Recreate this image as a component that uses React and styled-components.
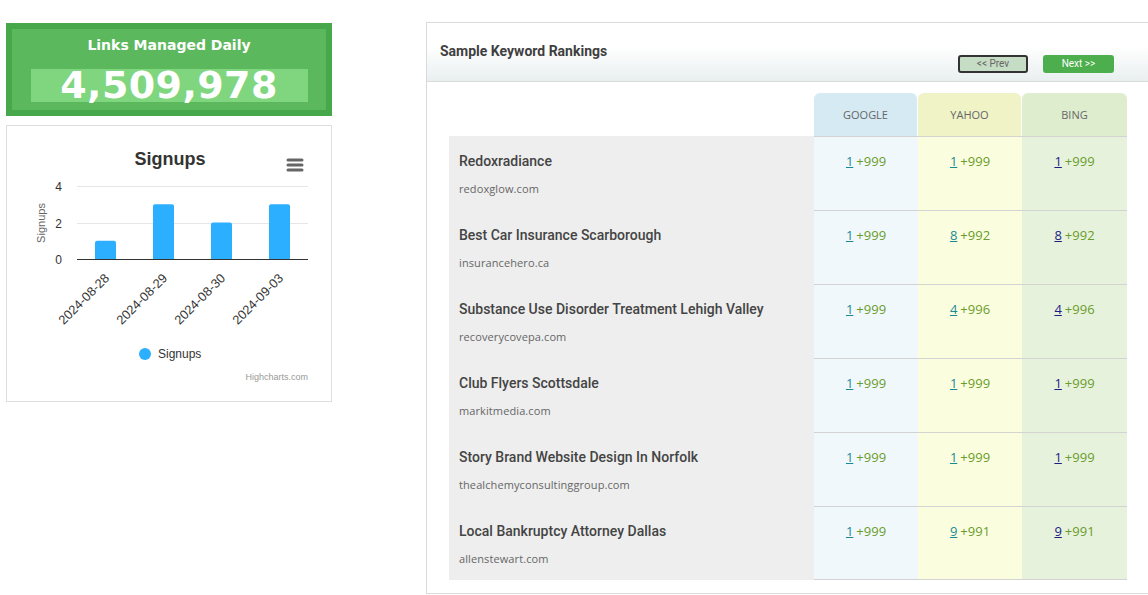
import styled, { createGlobalStyle } from "styled-components";

const GlobalStyle = createGlobalStyle`
  html, body {
    margin: 0;
    padding: 0;
    background: #fff;
    overflow: hidden;
  }
  body {
    font-family: "Open Sans", "Liberation Sans", sans-serif;
  }
`;

const Page = styled.div`
  display: flex;
  align-items: flex-start;
  padding: 22px 0 0 6px;
  width: 1300px;
`;

const LeftCol = styled.div`
  width: 326px;
  display: flex;
  flex-direction: column;
  gap: 9px;
  margin-top: 1px;
`;

const CounterBox = styled.div`
  height: 93px;
  box-sizing: border-box;
  background: #5cb85c;
  border: 6px solid #47a74b;
  display: flex;
  flex-direction: column;
  align-items: center;
  color: #fff;
  font-family: "DejaVu Sans", Verdana, sans-serif;
  font-weight: bold;
`;

const CounterTitle = styled.div`
  font-size: 14px;
  margin-top: 6px;
  height: 20px;
  line-height: 20px;
`;

const CounterValue = styled.div`
  margin-top: 14px;
  width: 277px;
  height: 33px;
  background: #7fd67f;
  font-size: 38px;
  line-height: 33px;
  text-align: center;
  letter-spacing: 0.4px;
`;

const ChartCard = styled.div`
  height: 277px;
  box-sizing: border-box;
  border: 1px solid #dedede;
  background: #fff;
`;

const Panel = styled.div`
  margin-left: 94px;
  width: 740px;
  height: 572px;
  box-sizing: border-box;
  border: 1px solid #dadada;
  display: flex;
  flex-direction: column;
`;

const PanelHead = styled.div`
  height: 59px;
  box-sizing: border-box;
  border-bottom: 1px solid #d8dcdc;
  background: linear-gradient(to bottom, #ffffff 40%, #e9efef 100%);
  display: flex;
  align-items: flex-start;
  padding: 0 0 0 13px;
`;

const PanelTitle = styled.h3`
  margin: 20px 0 0;
  font-family: Roboto, "Liberation Sans", sans-serif;
  font-size: 14px;
  font-weight: 700;
  color: #3f3f3f;
`;

const BtnGroup = styled.div`
  margin-left: auto;
  margin-right: 51px;
  margin-top: 32px;
  display: flex;
  gap: 15px;
`;

const NavBtn = styled.button`
  width: ${(p) => p.$w}px;
  height: 18px;
  box-sizing: border-box;
  padding: 0;
  border-radius: 3px;
  border: ${(p) => (p.$primary ? "none" : "2px solid #333")};
  background: ${(p) => (p.$primary ? "#4cae4c" : "#c5dcc5")};
  color: ${(p) => (p.$primary ? "#fff" : "#666")};
  font-family: Roboto, "Liberation Sans", sans-serif;
  font-size: 10px;
  line-height: 14px;
  cursor: pointer;
`;

const Table = styled.div`
  margin: 11px 0 0 22px;
  display: grid;
  grid-template-columns: 365px 104px 104px 105px;
`;

const HeadBlank = styled.div``;

const HeadCell = styled.div`
  height: 43px;
  background: ${(p) => p.$bg};
  border-radius: 6px 6px 0 0;
  margin-right: ${(p) => (p.$last ? 0 : 1)}px;
  display: flex;
  align-items: center;
  justify-content: center;
  font-size: 11px;
  color: #666;
  font-family: "Open Sans", sans-serif;
`;

const KeywordCell = styled.div`
  height: 74px;
  box-sizing: border-box;
  background: #eeeeee;
  padding: 16px 0 0 10px;
`;

const KeywordName = styled.div`
  font-family: Roboto, "Liberation Sans", sans-serif;
  font-weight: 500;
  font-size: 14px;
  color: #444;
  line-height: 18px;
`;

const KeywordDomain = styled.div`
  margin-top: 11px;
  font-size: 11px;
  color: #666;
  line-height: 15px;
  letter-spacing: 0.1px;
`;

const RankCell = styled.div`
  height: 74px;
  box-sizing: border-box;
  background: ${(p) => p.$bg};
  border-top: 1px solid #d3d3d3;
  border-bottom: ${(p) => (p.$lastRow ? "1px solid #d3d3d3" : "none")};
  padding-top: 15px;
  text-align: center;
  font-size: 13px;
  line-height: 18px;
`;

const RankNum = styled.a`
  color: ${(p) => p.$color};
  text-decoration: underline;
  cursor: pointer;
`;

const RankDelta = styled.span`
  color: #6a9c2c;
  margin-left: 3px;
`;

const engines = [
  { name: "GOOGLE", head: "#d5eaf3", body: "#f1f8fb", link: "#1b8a94" },
  { name: "YAHOO", head: "#eff3c6", body: "#fafedf", link: "#1b8a94" },
  { name: "BING", head: "#dfedcf", body: "#e7f2dd", link: "#1c1c86" },
];

const rows = [
  { kw: "Redoxradiance", domain: "redoxglow.com", ranks: [1, 1, 1] },
  { kw: "Best Car Insurance Scarborough", domain: "insurancehero.ca", ranks: [1, 8, 8] },
  { kw: "Substance Use Disorder Treatment Lehigh Valley", domain: "recoverycovepa.com", ranks: [1, 4, 4] },
  { kw: "Club Flyers Scottsdale", domain: "markitmedia.com", ranks: [1, 1, 1] },
  { kw: "Story Brand Website Design In Norfolk", domain: "thealchemyconsultinggroup.com", ranks: [1, 1, 1] },
  { kw: "Local Bankruptcy Attorney Dallas", domain: "allenstewart.com", ranks: [1, 9, 9] },
];

const signups = [
  { date: "2024-08-28", v: 1 },
  { date: "2024-08-29", v: 3 },
  { date: "2024-08-30", v: 2 },
  { date: "2024-09-03", v: 3 },
];

function SignupsChart() {
  const base = 133;
  const unit = 18.25;
  const chartFont = "'Liberation Sans', Arial, sans-serif";
  return (
    <svg width="324" height="275" viewBox="0 0 324 275" fontFamily={chartFont}>
      <text x="163" y="39" textAnchor="middle" fontSize="18" fontWeight="bold" fill="#333">
        Signups
      </text>
      <g stroke="#666" strokeWidth="3" strokeLinecap="round">
        <line x1="281" y1="34" x2="295" y2="34" />
        <line x1="281" y1="39" x2="295" y2="39" />
        <line x1="281" y1="44" x2="295" y2="44" />
      </g>
      <line x1="70" y1="60.5" x2="301" y2="60.5" stroke="#e6e6e6" />
      <line x1="70" y1="97.5" x2="301" y2="97.5" stroke="#e6e6e6" />
      <line x1="70" y1="133.5" x2="301" y2="133.5" stroke="#333" />
      {[4, 2, 0].map((n, i) => (
        <text key={n} x="55" y={65 + i * 36.5} textAnchor="end" fontSize="12" fill="#333">
          {n}
        </text>
      ))}
      <text
        x="0"
        y="0"
        transform="translate(38 97) rotate(-90)"
        textAnchor="middle"
        fontSize="11"
        fill="#666"
      >
        Signups
      </text>
      {signups.map((d, i) => {
        const x = 88 + i * 58;
        const h = d.v * unit;
        return (
          <g key={d.date}>
            <path
              d={`M${x} ${base} V${base - h + 2} Q${x} ${base - h} ${x + 2} ${base - h} H${x + 19} Q${x + 21} ${base - h} ${x + 21} ${base - h + 2} V${base} Z`}
              fill="#2caffe"
            />
            <text
              x="0"
              y="0"
              transform={`translate(${x + 15} ${base + 20}) rotate(-45)`}
              textAnchor="end"
              fontSize="12.8"
              fill="#333"
            >
              {d.date}
            </text>
          </g>
        );
      })}
      <circle cx="138" cy="228" r="6" fill="#2caffe" />
      <text x="151" y="232" fontSize="12" fill="#333">
        Signups
      </text>
      <text x="301" y="254" textAnchor="end" fontSize="9" fill="#999">
        Highcharts.com
      </text>
    </svg>
  );
}

export default function App() {
  return (
    <>
      <GlobalStyle />
      <Page>
        <LeftCol>
          <CounterBox>
            <CounterTitle>Links Managed Daily</CounterTitle>
            <CounterValue>4,509,978</CounterValue>
          </CounterBox>
          <ChartCard>
            <SignupsChart />
          </ChartCard>
        </LeftCol>

        <Panel>
          <PanelHead>
            <PanelTitle>Sample Keyword Rankings</PanelTitle>
            <BtnGroup>
              <NavBtn $w={70}>&lt;&lt; Prev</NavBtn>
              <NavBtn $w={71} $primary>
                Next &gt;&gt;
              </NavBtn>
            </BtnGroup>
          </PanelHead>

          <Table>
            <HeadBlank />
            {engines.map((e, i) => (
              <HeadCell key={e.name} $bg={e.head} $last={i === engines.length - 1}>
                {e.name}
              </HeadCell>
            ))}
            {rows.map((r, ri) => [
              <KeywordCell key={r.kw}>
                <KeywordName>{r.kw}</KeywordName>
                <KeywordDomain>{r.domain}</KeywordDomain>
              </KeywordCell>,
              ...engines.map((e, ei) => (
                <RankCell
                  key={r.kw + e.name}
                  $bg={e.body}
                  $lastRow={ri === rows.length - 1}
                >
                  <RankNum $color={e.link}>{r.ranks[ei]}</RankNum>
                  <RankDelta>+{1000 - r.ranks[ei]}</RankDelta>
                </RankCell>
              )),
            ])}
          </Table>
        </Panel>
      </Page>
    </>
  );
}
